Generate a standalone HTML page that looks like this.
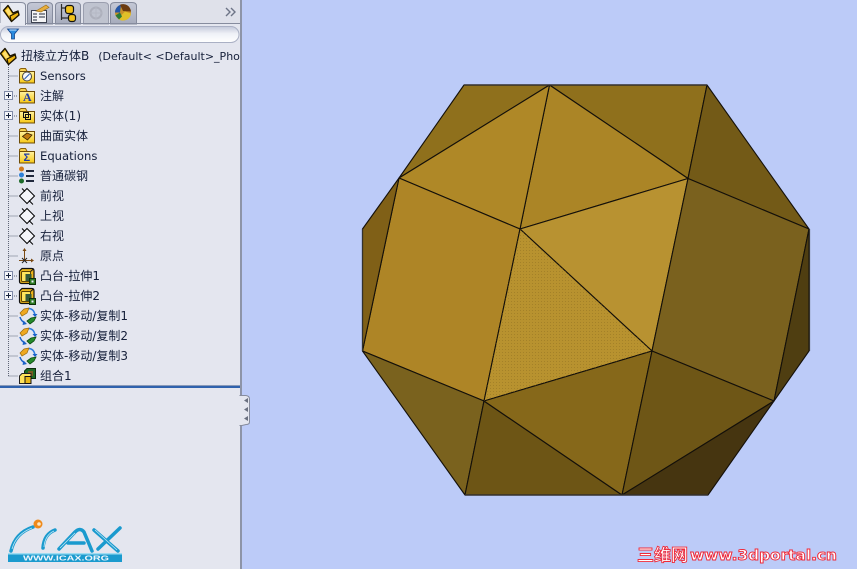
<!DOCTYPE html>
<html><head><meta charset="utf-8"><style>
html,body{margin:0;padding:0;width:857px;height:569px;overflow:hidden;background:#bccbf8}
*{box-sizing:border-box}
#p{position:absolute;left:0;top:0;width:240px;height:569px;background:#e4e6ef;overflow:hidden}
.t{position:absolute;left:40px;height:20px;font:12px/20px "DejaVu Sans","WenQuanYi Zen Hei","Noto Sans CJK SC",sans-serif;color:#16203a;white-space:nowrap}
.l{font-size:11.6px}
svg{position:absolute;overflow:visible}
</style></head><body>
<svg style="left:0;top:0" width="857" height="569" viewBox="0 0 857 569">
<defs>
<linearGradient id="tab" x1="0" y1="0" x2="0" y2="1"><stop offset="0" stop-color="#c4c8d6"/><stop offset="1" stop-color="#a6abbc"/></linearGradient>
<linearGradient id="fl" x1="0" y1="0" x2="0" y2="1"><stop offset="0" stop-color="#fff2a0"/><stop offset="1" stop-color="#f8c814"/></linearGradient>
<linearGradient id="flt" x1="0" y1="0" x2="0" y2="1"><stop offset="0" stop-color="#c3c8da"/><stop offset=".45" stop-color="#eff1f7"/><stop offset="1" stop-color="#fff"/></linearGradient>
<g id="folder"><path d="M.5 3.500V1.500L2 .5H6.500L8 3" fill="#f6d050" stroke="#8a5f08"/><rect x=".5" y="3.500" width="15" height="11.500" fill="url(#fl)" stroke="#6e4c06"/></g>
<g id="plane"><path d="M8 .5L15.500 8 8 15.500 .5 8Z" fill="#f4f5fa" stroke="#000"/><path d="M3 .5L6 3.500M10 12.500L14 16.500" stroke="#000"/></g>
<g id="boss"><path d="M.5 3L3 .5H13Q15 .5 15 3V12L12 15.500H2.500Q.5 15.500 .5 13.500Z" fill="#eab51a" stroke="#111" stroke-width="1.200"/><rect x="2.500" y="3.500" width="9" height="10" rx="1" fill="#ffe45c" stroke="#5a4305"/><path d="M11.500 3.500L14.500 1" stroke="#111"/><rect x="6.500" y="6" width="6" height="7" fill="#33583a"/><rect x="10.500" y="10.500" width="6" height="6" fill="#2c7a22" stroke="#0d3008"/><rect x="12.500" y="12.500" width="2" height="2" fill="#eef"/></g>
<g id="move"><path d="M1 5L5 1 10 0 8 5 3 8Z" fill="#efa820" stroke="#9a6a10" stroke-width=".7"/><path d="M8 13L12 10 17 9 15 13 11 16Z" fill="#258a2c" stroke="#0c4a10" stroke-width=".8"/><path d="M10 .5Q15 1 16 7" fill="none" stroke="#2d7be0" stroke-width="1.500"/><path d="M1 9Q2 13 6 15" fill="none" stroke="#1c62c8" stroke-width="1.500"/><path d="M13.500 6h5l-2.500 3zM4.500 12.500l3.500 3.500-4.500 1z" fill="#1c62c8"/></g>
<g id="plus"><rect x=".5" y=".5" width="8" height="8" fill="#f4f5fa" stroke="#7f8aa8"/><path d="M2 4.500H7M4.500 2V7" stroke="#15203c"/></g>
<g id="part"><path d="M.5 5.500L5 .5 10 8 15 6 16 10 8.500 16.500Z" fill="#eeb510" stroke="#1c1400" stroke-width="1.400" stroke-linejoin="round"/><path d="M2.500 5.500L5.500 3 9 9 6 11Z" fill="#ffe070"/><path d="M8.500 16.500L7 11 15 7" fill="none" stroke="#1c1400"/></g>
<pattern id="n1" width="3" height="3" patternUnits="userSpaceOnUse"><rect x="1" y="1" width="1" height="1" fill="#8d6d20" opacity=".45"/></pattern>
</defs>

<!-- 3D model -->
<rect x="240" width="617" height="569" fill="#bccbf8"/>
<g stroke="#14100a" stroke-width="1.100" stroke-linejoin="round">
<path fill="#8f701c" d="M464 85H549.500L399 178Z"/>
<path fill="#8f701c" d="M549.500 85H707L688 178.500Z"/>
<path fill="#735a17" d="M707 85L809 229 688 178.500Z"/>
<path fill="#ab8526" d="M549.500 85L688 178.500 520 229Z"/>
<path fill="#af8827" d="M549.500 85L520 229 399 178Z"/>
<path fill="#b89231" d="M520 229L688 178.500 652 351Z"/>
<path fill="#ae8526" d="M399 178L520 229 484 401 362.500 351Z"/>
<path fill="#806017" d="M399 178L362.500 229V351Z"/>
<path fill="#b8922f" d="M520 229L652 351 484 401Z"/>
<path fill="#7a611e" d="M688 178.500L809 229 774 401 652 351Z"/>
<path fill="#4f3e11" d="M809 229V351L774 401Z"/>
<path fill="#7a621e" d="M362.500 351L484 401 465 495Z"/>
<path fill="#6d5515" d="M484 401L622 495H465Z"/>
<path fill="#86681a" d="M484 401L652 351 622 495Z"/>
<path fill="#6e5616" d="M652 351L774 401 622 495Z"/>
<path fill="#463510" d="M774 401L708 495H622Z"/>
</g>
<path d="M520 229L652 351 484 401Z" fill="url(#n1)"/>
<path d="M464 85H707M465 495H708" stroke="#34302c" stroke-width="1.500"/>
<path d="M362.500 229V351M809.500 229V351" stroke="#34322e" stroke-width="1.200"/>
</svg>

<div id="p">
<svg style="left:0;top:0" width="240" height="569" viewBox="0 0 240 569">
<!-- tab bar -->
<rect width="240" height="24" fill="#dfe1ea"/>
<path d="M27.500 24V6Q27.500 2.500 32 2.500H48Q52.500 2.500 52.500 6V24Z" fill="url(#tab)" stroke="#868c9e"/>
<path d="M55.500 24V6Q55.500 2.500 60 2.500H76Q80.500 2.500 80.500 6V24Z" fill="url(#tab)" stroke="#868c9e"/>
<path d="M83.500 24V6Q83.500 2.500 88 2.500H104Q108.500 2.500 108.500 6V24Z" fill="#bfc3cf" stroke="#9a9eae"/>
<path d="M110.500 24V6Q110.500 2.500 115 2.500H132Q136.500 2.500 136.500 6V24Z" fill="url(#tab)" stroke="#868c9e"/>
<path d="M0 23.500H240" stroke="#868c9e"/>
<path d="M0 24.500V2.500H21Q25.500 2.500 25.500 6V24.500Z" fill="#e8eaf2" stroke="#868c9e"/>
<path d="M0 24H25" stroke="#e8eaf2" stroke-width="2"/>
<use href="#part" x="3" y="5"/>
<!-- property tab -->
<rect x="31.500" y="10.500" width="15" height="12" fill="#f4f4f6" stroke="#3c4150"/><path d="M33 14h4M39 14h6M33 17h4M39 17h6M33 20h4" stroke="#4a5060" stroke-width="1.200"/><path d="M36 11L46 5 49 7.500 41 12Z" fill="#e8ae3c" stroke="#a07018" stroke-width=".7"/>
<!-- config tab -->
<path d="M61.500 4V20M61.500 8H66M61.500 18H69" stroke="#2c2c2c" fill="none" stroke-width="1.200"/><rect x="65.500" y="5.500" width="8" height="8" rx="2.500" fill="#f2c21c" stroke="#111" stroke-width="1.200"/><rect x="68.500" y="14.500" width="7" height="7" rx="2.500" fill="#f2c21c" stroke="#111" stroke-width="1.200"/>
<!-- disabled tab -->
<circle cx="96" cy="13" r="5.500" fill="none" stroke="#adb0bc" stroke-width="2"/><path d="M96 6V20M90 13H102" stroke="#b5b8c4"/>
<!-- appearance tab -->
<circle cx="123" cy="12.500" r="8" fill="#c89028"/><path d="M115 12.500A8 8 0 0 1 121 4.700L120 12.500Z" fill="#2456a8"/><path d="M120 4.700A8 8 0 0 1 131 11.500L123 11Z" fill="#6a3a10"/><path d="M118 18.700L125 11.500 131 13.500A8 8 0 0 1 118 18.700Z" fill="#e0c028"/><path d="M115.500 15.500L120 12.500 122 16.500 119 19.500Z" fill="#287a38"/>
<path d="M226 8L230 12 226 16M231 8L235 12 231 16" fill="none" stroke="#6d7486" stroke-width="1.400"/>
<!-- filter -->
<rect x=".5" y="26.500" width="238.500" height="16" rx="8" fill="url(#flt)" stroke="#aab0c4"/>
<path d="M7.500 29H18.500L14.500 34V39H11.500V34Z" fill="#2a8ade" stroke="#16468c" stroke-width=".8"/>
<path d="M9.500 30H16.500" stroke="#cfe8ff"/>
<!-- tree connectors -->
<path d="M8.500 65V376M8.500 76H18M14 96H18M14 116H18M8.500 136H18M8.500 156H18M8.500 176H18M8.500 196H18M8.500 216H18M8.500 236H18M8.500 256H18M14 276H18M14 296H18M8.500 316H18M8.500 336H18M8.500 356H18M8.500 376H18" stroke="#5e6476" stroke-dasharray="1 1" fill="none"/>
<!-- root -->
<use href="#part" x="0" y="48"/>
<!-- folders -->
<use href="#folder" x="19" y="68"/><circle cx="27" cy="76.500" r="4.500" fill="#f4f6fa" stroke="#444"/><path d="M24.500 79L29.500 74" stroke="#1f55b0"/>
<use href="#folder" x="19" y="88"/><text x="23" y="101" font-family="Liberation Serif" font-size="12" font-weight="bold" fill="#1e3aa8">A</text>
<use href="#folder" x="19" y="108"/><rect x="25.500" y="114.500" width="5" height="5" fill="none" stroke="#111"/><rect x="23.500" y="112.500" width="5" height="5" fill="none" stroke="#111"/>
<use href="#folder" x="19" y="128"/><path d="M22.500 136.500L27 133 32 135 27.500 140Z" fill="#c07a10" stroke="#402800" stroke-width=".8"/>
<use href="#folder" x="19" y="148"/><text x="23.500" y="161" font-family="Liberation Sans" font-size="11" font-weight="bold" fill="#1e3aa8">Σ</text>
<!-- material -->
<circle cx="21.500" cy="169" r="2.500" fill="#d07a20"/><circle cx="21.500" cy="175" r="2.500" fill="#2e80d8"/><circle cx="21.500" cy="181" r="2.500" fill="#1c6a28"/>
<path d="M26 171H34M26 176H34M26 181H34" stroke="#20283c" stroke-width="2"/>
<!-- planes -->
<use href="#plane" x="19" y="188"/><use href="#plane" x="19" y="208"/><use href="#plane" x="19" y="228"/>
<!-- origin -->
<path d="M24.500 249V260M19 260.500H33" stroke="#7a4a14" fill="none"/><path d="M24.500 248l-2 3h4zM34 260.500l-3-2v4z" fill="#7a4a14"/><path d="M22 258l5 5M27 258l-5 5" stroke="#222"/>
<!-- plus -->
<use href="#plus" x="4" y="91"/><use href="#plus" x="4" y="111"/><use href="#plus" x="4" y="271"/><use href="#plus" x="4" y="291"/>
<!-- features -->
<use href="#boss" x="19" y="268"/><use href="#boss" x="19" y="288"/>
<use href="#move" x="19" y="308"/><use href="#move" x="19" y="328"/><use href="#move" x="19" y="348"/>
<!-- combine -->
<path d="M24.500 371L27 368.500H35.500V378.500H24.500Z" fill="#1f6a24" stroke="#0b2c0c"/><rect x="28" y="371" width="5" height="5" fill="#7a5a20"/>
<path d="M19.500 376L22 373.500H31V383.500H19.500Z" fill="#ffe25a" stroke="#222"/><rect x="25" y="376.500" width="6" height="7" fill="#e8b818" stroke="#111"/>
<!-- separator -->
<rect y="386" width="240" height="2" fill="#2f62ad"/><rect y="385" width="240" height="1" fill="#8a9ab8"/>
<!-- ICAX logo -->
<g fill="none" stroke="#1a9ace" stroke-linecap="round">
<path d="M11 551Q15 533 33 527" stroke-width="3.500"/>
<path d="M55 530Q44 534 43 548" stroke-width="3.500"/>
<path d="M59 549L75 532Q80 527 84 532L92 551M68 543H84" stroke-width="3.500"/>
<path d="M94 530L118 551M120 528L98 549" stroke-width="3.500"/>
</g>
<g fill="none" stroke="#bfe6f5" stroke-width=".8"><path d="M12 549Q16 534 32 528M44 547Q45 535 54 531M60 548L75 533M95 530L117 550"/></g>
<circle cx="38" cy="524" r="4.500" fill="#ef8a1c"/><circle cx="39" cy="524" r="1.800" fill="#ffe8c0"/>
<rect x="8" y="553" width="114" height="9" fill="#1a9ace"/><rect x="8" y="553" width="114" height="1.500" fill="#9edcf2"/>
<text x="23" y="560.500" font-family="Liberation Sans" font-size="7" font-weight="bold" fill="#eef6fc" textLength="86" lengthAdjust="spacingAndGlyphs">WWW.ICAX.ORG</text>
</svg>
<div class="t" style="left:21px;top:46px">扭棱立方体B<span style="font-size:11px;margin-left:9px">(Default&lt; &lt;Default&gt;_PhotoWorks</span></div>
<div class="t l" style="top:66px">Sensors</div>
<div class="t" style="top:86px">注解</div>
<div class="t" style="top:106px">实体(1)</div>
<div class="t" style="top:126px">曲面实体</div>
<div class="t l" style="top:146px">Equations</div>
<div class="t" style="top:166px">普通碳钢</div>
<div class="t" style="top:186px">前视</div>
<div class="t" style="top:206px">上视</div>
<div class="t" style="top:226px">右视</div>
<div class="t" style="top:246px">原点</div>
<div class="t" style="top:266px">凸台-拉伸1</div>
<div class="t" style="top:286px">凸台-拉伸2</div>
<div class="t" style="top:306px">实体-移动/复制1</div>
<div class="t" style="top:326px">实体-移动/复制2</div>
<div class="t" style="top:346px">实体-移动/复制3</div>
<div class="t" style="top:366px">组合1</div>
</div>
<svg style="left:0;top:0" width="857" height="569" viewBox="0 0 857 569">
<rect x="240" width="2" height="569" fill="#8d94a8"/>
<path d="M240 395.500H246Q249.500 396 249.500 399V422Q249.500 424.500 246 424.500L242 425.500H240Z" fill="#e4e6ef" stroke="#868c9e"/>
<rect x="239" y="396" width="3" height="29" fill="#e4e6ef"/>
<path d="M248 398v5l-4-2.500zM248 407v5l-4-2.500zM248 416v5l-4-2.500z" fill="#6a7080"/>
<text x="637" y="561" font-family="'Noto Sans CJK SC',sans-serif" font-size="17" font-weight="bold" fill="#fff" stroke="#ee2a3a" stroke-width=".9">三维网</text>
<text x="690" y="560" font-family="'DejaVu Sans',sans-serif" font-size="14" font-weight="bold" fill="#fff" stroke="#ee2a3a" stroke-width=".9" textLength="147" lengthAdjust="spacingAndGlyphs">www.3dportal.cn</text>
</svg>
</body></html>
